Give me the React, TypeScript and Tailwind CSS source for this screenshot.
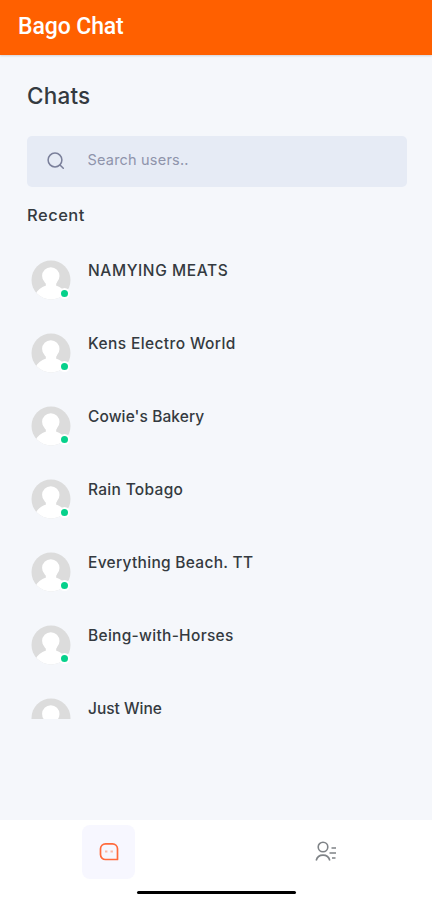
/**
 * Chat list screen - search box, recent conversations and bottom tabs
 */

interface Chat {
  id: number;
  name: string;
  nameClass: string;
}

const chats: Chat[] = [
  { id: 1, name: 'NAMYING MEATS', nameClass: 'tracking-[0.6px]' },
  { id: 2, name: 'Kens Electro World', nameClass: 'tracking-[0.4px]' },
  { id: 3, name: "Cowie's Bakery", nameClass: 'tracking-[0.1px]' },
  { id: 4, name: 'Rain Tobago', nameClass: 'tracking-[0.3px]' },
  { id: 5, name: 'Everything Beach. TT', nameClass: 'tracking-[0.3px]' },
  { id: 6, name: 'Being-with-Horses', nameClass: 'tracking-[0.3px]' },
  { id: 7, name: 'Just Wine', nameClass: 'tracking-normal' },
];

function Avatar() {
  return (
    <div className="relative h-10 w-10 shrink-0">
      <svg viewBox="0 0 40 40" className="h-10 w-10">
        <defs>
          <clipPath id="avatar-circle">
            <circle cx="20" cy="20" r="19.500" />
          </clipPath>
        </defs>
        <g clipPath="url(#avatar-circle)">
          <rect width="40" height="40" fill="#dcdcdc" />
          <ellipse cx="19.800" cy="16" rx="8.700" ry="8.800" fill="#fff" />
          <path d="M14 20h12l-1 5.500c5 1.500 8.500 4.500 11 9.500V40H4v-5C6.500 30 10 27 15 25.500z" fill="#fff" />
        </g>
      </svg>
      {/* online dot */}
      <span className="absolute top-[28px] left-[28px] h-[11px] w-[11px] rounded-full border-2 border-white bg-[#06d18b]" />
    </div>
  );
}

function ChatRow({ chat }: { chat: Chat }) {
  return (
    <li className="flex h-[73px] items-start">
      <Avatar />
      <span
        className={`mt-px ml-[17px] text-[15.5px] leading-5 font-medium whitespace-nowrap text-[#343a40] ${chat.nameClass}`}
      >
        {chat.name}
      </span>
    </li>
  );
}

export default function App() {
  return (
    <div className="flex h-[900px] w-[432px] flex-col overflow-hidden bg-[#f5f7fb] font-['Inter',sans-serif]">
      <header className="flex h-[55px] shrink-0 items-center bg-[#ff6000] pb-px pl-[18px] shadow-[0_1px_2px_rgba(0,0,0,0.15)]">
        <h1 className="font-['Roboto',sans-serif] text-[23px] leading-7 font-medium tracking-[-0.1px] text-white">
          Bago Chat
        </h1>
      </header>

      <main className="flex flex-1 flex-col px-[27px] pt-[25px]">
        <h2 className="text-[22.5px] leading-8 font-medium tracking-[0.2px] text-[#343a40]">Chats</h2>

        {/* Search */}
        <div className="mt-6 mr-[-2px] flex h-[50.5px] items-center rounded-[5px] bg-[#e6ebf5]">
          <svg
            viewBox="0 0 20 20"
            className="ml-[19px] h-5 w-5"
            fill="none"
            stroke="#7a7f9a"
            strokeWidth="1.5"
            strokeLinecap="round"
          >
            <circle cx="9" cy="9" r="6.900" />
            <path d="M14 14L17.300 17.300" />
          </svg>
          <input
            type="text"
            placeholder="Search users.."
            className="ml-[21.5px] h-6 w-60 bg-transparent pb-[3px] text-[14.5px] tracking-[0.2px] outline-none placeholder:text-[#8f94ab]"
          />
        </div>

        <h3 className="mt-[16.500px] text-[16.5px] leading-6 font-medium tracking-[0.5px] text-[#343a40]">
          Recent
        </h3>

        {/* Recent list, cut off at its own height */}
        <ul className="mt-[33px] ml-1 h-[459px] overflow-hidden">
          {chats.map((chat) => (
            <ChatRow key={chat.id} chat={chat} />
          ))}
        </ul>
      </main>

      <nav className="relative flex h-20 shrink-0 bg-white pt-[5px]">
        <div className="flex w-[217px] justify-center">
          <button className="flex h-[54px] w-[53px] items-center justify-center rounded-lg bg-[#f7f7ff]">
            <svg viewBox="0 0 20 20" className="h-5 w-5" fill="none" stroke="#ff6a3c" strokeWidth="1.700">
              <path
                d="M6.500 1.800h7a5 5 0 0 1 5 5V17.500H6.500a5 5 0 0 1-5-5V6.800a5 5 0 0 1 5-5z"
                strokeLinejoin="round"
              />
              <path d="M6 9.500h2.400M11.500 9.500h2.400" strokeWidth="2" opacity="0.45" />
            </svg>
          </button>
        </div>
        <div className="flex flex-1 justify-center">
          <button className="ml-[3px] flex h-[54px] w-[53px] items-center justify-center">
            <svg
              viewBox="0 0 24 24"
              className="h-6 w-6"
              fill="none"
              stroke="#7f8387"
              strokeWidth="1.600"
            >
              <circle cx="9" cy="7" r="4.800" />
              <path d="M2.200 20.500a7 7 0 0 1 13.600 0" />
              <path d="M17.500 8H22M15.500 13H22M18 18h3.500" />
            </svg>
          </button>
        </div>
        {/* home indicator */}
        <span className="absolute top-[71px] left-[137px] h-[3px] w-[159px] rounded-full bg-black" />
      </nav>
    </div>
  );
}
